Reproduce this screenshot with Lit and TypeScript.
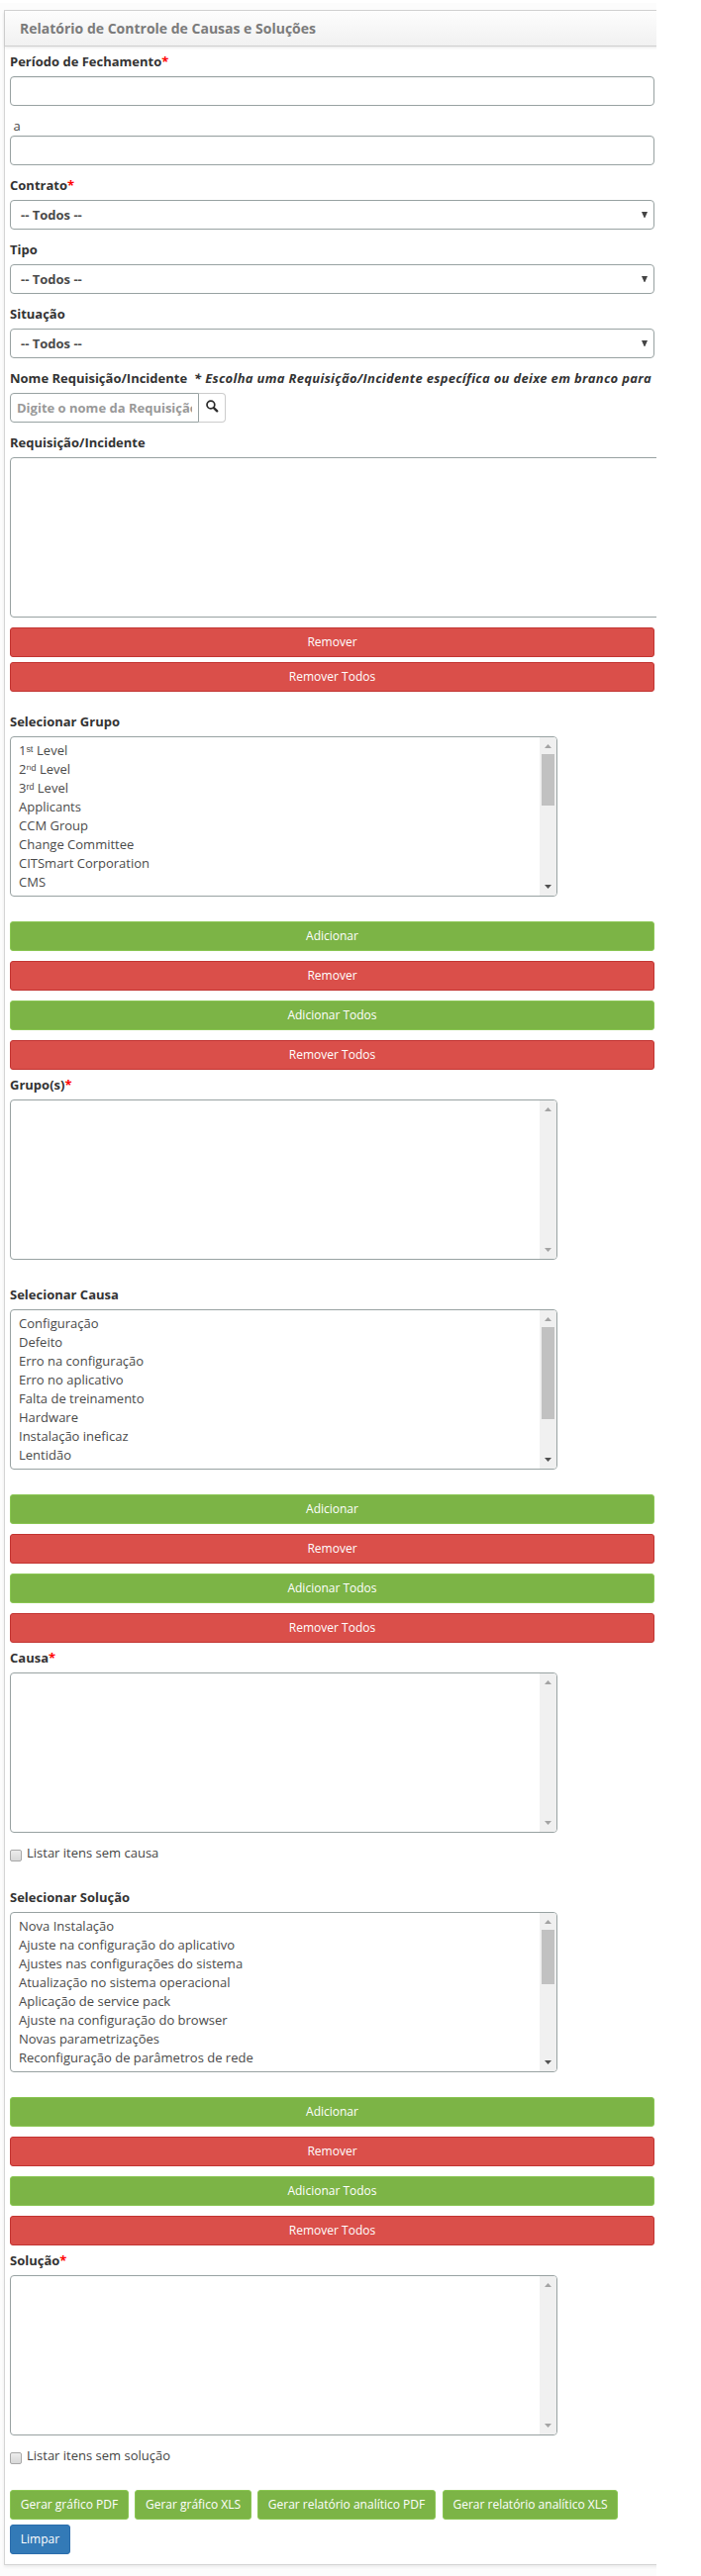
import { LitElement, html, css, nothing } from "lit";
import { customElement, property } from "lit/decorators.js";

const shared = css`
  :host { display: block; }
  * { box-sizing: border-box; }
  .label { height: 20px; line-height: 20px; margin-bottom: 5px; font-weight: 700; color: #333; white-space: nowrap; }
  .req { color: #f00; }
`;

@customElement("list-box")
class ListBox extends LitElement {
  @property({ attribute: false }) items: string[] = [];
  @property({ type: Number }) thumb = 0;

  static styles = [shared, css`
    .box {
      display: flex; width: 553px; height: 162px; background: #fff;
      border: 1px solid #98a2a2; border-radius: 4px; overflow: hidden;
    }
    .items { flex: 1; padding: 4px 8px 0; color: #4a4a4a; }
    .item { height: 19px; line-height: 19px; white-space: nowrap; }
    .bar { width: 17px; background: #f0f0f0; display: flex; flex-direction: column; align-items: center; }
    .end { width: 17px; height: 17px; display: block; flex: none; }
    .track { flex: 1; }
    .thumb { width: 13px; background: #c1c1c1; }
  `];

  render() {
    const active = this.items.length > 0;
    return html`
      <div class="box">
        <div class="items">${this.items.map((t) => html`<div class="item">${t}</div>`)}</div>
        <div class="bar">
          <svg class="end" viewBox="0 0 17 17"><path d="M5 11h7L8.5 7z" fill="#a3a3a3" /></svg>
          <div class="track">
            ${this.thumb ? html`<div class="thumb" style="height:${this.thumb}px"></div>` : nothing}
          </div>
          <svg class="end" viewBox="0 0 17 17"><path d="M5 6h7L8.5 10z" fill=${active ? "#505050" : "#a3a3a3"} /></svg>
        </div>
      </div>`;
  }
}

interface Picker {
  source: string;
  items: string[];
  thumb: number;
  target: string;
  check?: string;
}

const PICKERS: Picker[] = [
  {
    source: "Selecionar Grupo",
    items: ["1ˢᵗ Level", "2ⁿᵈ Level", "3ʳᵈ Level", "Applicants", "CCM Group", "Change Committee", "CITSmart Corporation", "CMS"],
    thumb: 52,
    target: "Grupo(s)",
  },
  {
    source: "Selecionar Causa",
    items: ["Configuração", "Defeito", "Erro na configuração", "Erro no aplicativo", "Falta de treinamento", "Hardware", "Instalação ineficaz", "Lentidão"],
    thumb: 93,
    target: "Causa",
    check: "Listar itens sem causa",
  },
  {
    source: "Selecionar Solução",
    items: ["Nova Instalação", "Ajuste na configuração do aplicativo", "Ajustes nas configurações do sistema", "Atualização no sistema operacional", "Aplicação de service pack", "Ajuste na configuração do browser", "Novas parametrizações", "Reconfiguração de parâmetros de rede"],
    thumb: 55,
    target: "Solução",
    check: "Listar itens sem solução",
  },
];

@customElement("app-root")
class AppRoot extends LitElement {
  static styles = [shared, css`
    :host {
      height: 2603px; overflow: hidden; background: #fff; padding-top: 3px; box-sizing: border-box;
      font: 13px/20px "Open Sans", sans-serif; color: #444;
    }
    .page { width: 663px; height: 2600px; overflow: hidden; background: #fcfcfc; padding: 7px 0 0 4px; }
    .panel {
      width: 720px; height: 2582px; background: #fff; border: 1px solid #d4d4d4;
      box-shadow: 0 2px 3px rgba(0, 0, 0, 0.07);
    }
    .head {
      height: 36px; line-height: 35px; padding-left: 15px; font-size: 14px; font-weight: 700; color: #7b7b7b;
      background: linear-gradient(#fdfdfd, #f1f1f1); border-bottom: 1px solid #cfcfcf;
      box-shadow: 0 1px 3px rgba(0, 0, 0, 0.1);
    }
    .body { width: 656px; padding: 5px 0 0 5px; }
    .field { margin-bottom: 10px; }
    .input {
      height: 30px; border: 1px solid #98a2a2; border-radius: 4px; background: #fff;
      box-shadow: inset 0 1px 1px rgba(0, 0, 0, 0.06);
    }
    .to { padding-left: 3.5px; }
    .select {
      height: 30px; border: 1px solid #98a2a2; border-radius: 4px; background: #fff;
      display: flex; align-items: center; justify-content: space-between; padding: 0 6px 0 10px;
      font-weight: 700; color: #4a4a4a;
    }
    .caret { width: 6px; height: 6px; display: block; }
    .note { font-style: italic; margin-left: 7px; letter-spacing: 0.31px; }
    .group { display: flex; height: 30px; }
    .search {
      width: 191px; border: 1px solid #98a2a2; border-radius: 4px 0 0 4px; padding: 0 6px;
      line-height: 28px; font-weight: 700; color: #999;
    }
    .clip { overflow: hidden; white-space: nowrap; }
    .addon {
      width: 27px; border: 1px solid #ccc; border-left: 0; border-radius: 0 4px 4px 0;
      display: flex; padding: 6px 0 0 7px;
    }
    .glass { width: 13px; height: 13px; display: block; }
    .wide { width: 700px; height: 162px; border: 1px solid #98a2a2; border-radius: 4px; background: #fff; margin-bottom: 10px; }
    .btn {
      height: 30px; line-height: 28px; border: 1px solid; border-radius: 3px;
      text-align: center; font-size: 12px; color: #fff; white-space: nowrap;
    }
    .red { background: #da4f4a; border-color: #c23431; }
    .green { background: #7cb446; border-color: #8ac653; }
    .blue { background: #337ab7; border-color: #2a6cab; width: 61px; }
    .pair { display: grid; gap: 5px; margin-bottom: 20px; }
    .stack { display: grid; gap: 10px; margin: 25px 0 5px; }
    .picker { margin-bottom: 25px; }
    .check { display: flex; height: 20px; margin-top: 10px; gap: 5px; }
    .tick {
      width: 12px; height: 12px; margin-top: 7px; border: 1px solid #a8a8a8; border-radius: 2px;
      background: linear-gradient(#ececec, #d8d8d8);
    }
    .actions { display: grid; grid-template-columns: 120px 118px 181px 177px; column-gap: 6px; margin-bottom: 5px; }
    .third { width: 180px; }
  `];

  private btn(kind: string, text: string) {
    return html`<div class="btn ${kind}">${text}</div>`;
  }

  private select(label: string, required = false) {
    return html`
      <div class="field">
        <div class="label">${label}${required ? html`<span class="req">*</span>` : nothing}</div>
        <div class="select">
          <span>-- Todos --</span>
          <svg class="caret" viewBox="0 0 6 6"><path d="M0 0h6L3.4 6h-.8z" fill="#444" /></svg>
        </div>
      </div>`;
  }

  private picker(p: Picker) {
    return html`
      <div class="picker">
        <div class="label">${p.source}</div>
        <list-box .items=${p.items} .thumb=${p.thumb}></list-box>
        <div class="stack">
          ${this.btn("green", "Adicionar")}${this.btn("red", "Remover")}
          ${this.btn("green", "Adicionar Todos")}${this.btn("red", "Remover Todos")}
        </div>
        <div class="label">${p.target}<span class="req">*</span></div>
        <list-box></list-box>
        ${p.check ? html`<div class="check"><span class="tick"></span><span>${p.check}</span></div>` : nothing}
      </div>`;
  }

  render() {
    return html`
      <div class="page">
        <div class="panel">
          <div class="head">Relatório de Controle de Causas e Soluções</div>
          <div class="body">
            <div class="field">
              <div class="label">Período de Fechamento<span class="req">*</span></div>
              <div class="input"></div>
            </div>
            <div class="field">
              <div class="to">a</div>
              <div class="input"></div>
            </div>
            ${this.select("Contrato", true)}${this.select("Tipo")}${this.select("Situação")}
            <div class="field">
              <div class="label">Nome Requisição/Incidente<span class="note">* Escolha uma Requisição/Incidente específica ou deixe em branco para</span></div>
              <div class="group">
                <div class="search"><div class="clip">Digite o nome da Requisição</div></div>
                <div class="addon">
                  <svg class="glass" viewBox="0 0 13 13" fill="none" stroke="#2b2b2b">
                    <circle cx="4.9" cy="5" r="3.9" stroke-width="1.7" />
                    <path d="M7.9 8.1l3.3 3.3" stroke-width="2.3" stroke-linecap="round" />
                  </svg>
                </div>
              </div>
            </div>
            <div class="label">Requisição/Incidente</div>
            <div class="wide"></div>
            <div class="pair">${this.btn("red", "Remover")}${this.btn("red", "Remover Todos")}</div>
            ${PICKERS.map((p) => this.picker(p))}
            <div class="actions">
              ${this.btn("green", "Gerar gráfico PDF")}${this.btn("green", "Gerar gráfico XLS")}
              ${this.btn("green third", "Gerar relatório analítico PDF")}${this.btn("green", "Gerar relatório analítico XLS")}
            </div>
            ${this.btn("blue", "Limpar")}
          </div>
        </div>
      </div>`;
  }
}
